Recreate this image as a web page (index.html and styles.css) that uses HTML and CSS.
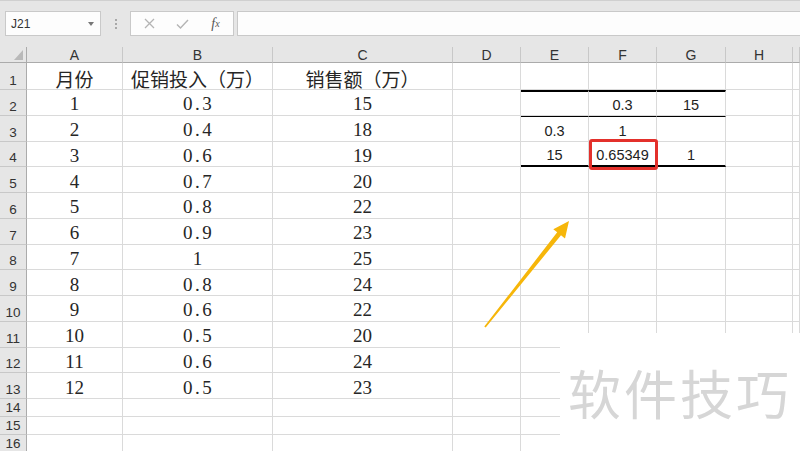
FILE: index.html
```html
<!DOCTYPE html>
<html lang="zh">
<head>
<meta charset="utf-8">
<title>Excel</title>
<link rel="stylesheet" href="styles.css">
</head>
<body>
<div class="toolbar">
  <div class="namebox"><span>J21</span><span class="caret"></span></div>
  <div class="dots"><i></i><i></i><i></i></div>
  <div class="fxbox">
    <span class="ico"><svg width="11" height="11" viewBox="0 0 11 11"><path d="M1 1L10 10M10 1L1 10" stroke="#b4b4b4" stroke-width="1.3" fill="none"/></svg></span>
    <span class="ico"><svg width="13" height="10" viewBox="0 0 13 10"><path d="M1 5.5L4.5 9L12 1" stroke="#b4b4b4" stroke-width="1.4" fill="none"/></svg></span>
    <span class="ico fx">f<sub>x</sub></span>
  </div>
  <div class="input"></div>
</div>

<div class="sheet">
  <div class="ch corner"><span class="tri"></span></div><div class="ch">A</div><div class="ch">B</div><div class="ch">C</div><div class="ch">D</div><div class="ch">E</div><div class="ch">F</div><div class="ch">G</div><div class="ch">H</div><div class="ch"></div>

  <div class="rh">1</div><div class="c t">月份</div><div class="c t">促销投入（万）</div><div class="c t">销售额（万）</div><div class="c"></div><div class="c"></div><div class="c"></div><div class="c"></div><div class="c"></div><div class="c"></div>

  <div class="rh">2</div><div class="c t">1</div><div class="c t n">0.3</div><div class="c t">15</div><div class="c"></div><div class="c s bt2"></div><div class="c s bt2">0.3</div><div class="c s bt2">15</div><div class="c"></div><div class="c"></div>

  <div class="rh">3</div><div class="c t">2</div><div class="c t n">0.4</div><div class="c t">18</div><div class="c"></div><div class="c s bt1">0.3</div><div class="c s bt1">1</div><div class="c s bt1"></div><div class="c"></div><div class="c"></div>

  <div class="rh">4</div><div class="c t">3</div><div class="c t n">0.6</div><div class="c t">19</div><div class="c"></div><div class="c s bb2">15</div><div class="c s bb2">0.65349</div><div class="c s bb2">1</div><div class="c"></div><div class="c"></div>

  <div class="rh">5</div><div class="c t">4</div><div class="c t n">0.7</div><div class="c t">20</div><div class="c"></div><div class="c"></div><div class="c"></div><div class="c"></div><div class="c"></div><div class="c"></div>

  <div class="rh">6</div><div class="c t">5</div><div class="c t n">0.8</div><div class="c t">22</div><div class="c"></div><div class="c"></div><div class="c"></div><div class="c"></div><div class="c"></div><div class="c"></div>

  <div class="rh">7</div><div class="c t">6</div><div class="c t n">0.9</div><div class="c t">23</div><div class="c"></div><div class="c"></div><div class="c"></div><div class="c"></div><div class="c"></div><div class="c"></div>

  <div class="rh">8</div><div class="c t">7</div><div class="c t">1</div><div class="c t">25</div><div class="c"></div><div class="c"></div><div class="c"></div><div class="c"></div><div class="c"></div><div class="c"></div>

  <div class="rh">9</div><div class="c t">8</div><div class="c t n">0.8</div><div class="c t">24</div><div class="c"></div><div class="c"></div><div class="c"></div><div class="c"></div><div class="c"></div><div class="c"></div>

  <div class="rh">10</div><div class="c t">9</div><div class="c t n">0.6</div><div class="c t">22</div><div class="c"></div><div class="c"></div><div class="c"></div><div class="c"></div><div class="c"></div><div class="c"></div>

  <div class="rh">11</div><div class="c t">10</div><div class="c t n">0.5</div><div class="c t">20</div><div class="c"></div><div class="c"></div><div class="c"></div><div class="c"></div><div class="c"></div><div class="c"></div>

  <div class="rh">12</div><div class="c t">11</div><div class="c t n">0.6</div><div class="c t">24</div><div class="c"></div><div class="c"></div><div class="c"></div><div class="c"></div><div class="c"></div><div class="c"></div>

  <div class="rh">13</div><div class="c t">12</div><div class="c t n">0.5</div><div class="c t">23</div><div class="c"></div><div class="c"></div><div class="c"></div><div class="c"></div><div class="c"></div><div class="c"></div>

  <div class="rh">14</div><div class="c"></div><div class="c"></div><div class="c"></div><div class="c"></div><div class="c"></div><div class="c"></div><div class="c"></div><div class="c"></div><div class="c"></div>

  <div class="rh">15</div><div class="c"></div><div class="c"></div><div class="c"></div><div class="c"></div><div class="c"></div><div class="c"></div><div class="c"></div><div class="c"></div><div class="c"></div>

  <div class="rh">16</div><div class="c"></div><div class="c"></div><div class="c"></div><div class="c"></div><div class="c"></div><div class="c"></div><div class="c"></div><div class="c"></div><div class="c"></div>
</div>

<div class="highlight"></div>

<svg class="arrow" width="800" height="451" viewBox="0 0 800 451">
  <polygon points="484.3,326.6 557.2,232.2 553.3,229.2 569,221 565,238.6 561,235.2 485.7,327.6" fill="#f6b60a"/>
</svg>

<div class="watermark"><span>软件技巧</span></div>
</body>
</html>
```

FILE: styles.css
```css
html, body {
  margin: 0;
  padding: 0;
}

body {
  width: 800px;
  height: 451px;
  overflow: hidden;
  position: relative;
  background: #ffffff;
  font-family: "Liberation Sans", Arial, sans-serif;
}

/* ---------- formula bar ---------- */
.toolbar {
  height: 47px;
  box-sizing: border-box;
  background: #e6e6e6;
  border-top: 1px solid #d0d0d0;
  padding-top: 10px;
  display: flex;
  align-items: flex-start;
}

.namebox {
  margin-left: 5px;
  width: 96px;
  height: 25px;
  box-sizing: border-box;
  background: #fdfdfd;
  border: 1px solid #c9c9c9;
  display: flex;
  align-items: center;
  justify-content: space-between;
  padding: 0 6px 0 5px;
  font-size: 12px;
  color: #333;
}

.caret {
  width: 0;
  height: 0;
  border-left: 3.5px solid transparent;
  border-right: 3.5px solid transparent;
  border-top: 4px solid #777;
}

.dots {
  width: 29px;
  height: 25px;
  display: flex;
  flex-direction: column;
  align-items: center;
  justify-content: center;
  gap: 2px;
}

.dots i {
  display: block;
  width: 2px;
  height: 2px;
  background: #a8a8a8;
}

.fxbox {
  width: 104px;
  height: 25px;
  box-sizing: border-box;
  background: #fdfdfd;
  border: 1px solid #c9c9c9;
  display: flex;
  align-items: center;
  padding-left: 2px;
}

.ico {
  width: 33px;
  display: flex;
  align-items: center;
  justify-content: center;
}

.fx {
  font-family: "Liberation Serif", serif;
  font-style: italic;
  font-size: 14px;
  color: #555;
}

.fx sub {
  font-size: 10px;
  vertical-align: -1px;
}

.input {
  margin-left: 3px;
  flex: 1;
  height: 25px;
  box-sizing: border-box;
  background: #fdfdfd;
  border: 1px solid #c9c9c9;
  border-right: none;
}

/* ---------- sheet grid ---------- */
.sheet {
  display: grid;
  grid-template-columns: 27px 96px 150px 180px 68px 68px 68px 69px 67px 1fr;
  grid-template-rows: 16px 27px repeat(12, 25.75px) repeat(3, 18px);
}

.sheet > div {
  box-sizing: border-box;
  min-width: 0;
}

.ch {
  background: #e6e6e6;
  border-right: 1px solid #c8c8c8;
  border-bottom: 1px solid #ababab;
  display: flex;
  align-items: center;
  justify-content: center;
  font-size: 14px;
  color: #333;
}

.corner {
  align-items: flex-end;
  justify-content: flex-end;
  padding: 0 3px 2px 0;
  border-right: 1px solid #ababab;
}

.tri {
  width: 0;
  height: 0;
  border-left: 9px solid transparent;
  border-bottom: 10px solid #b9b9b9;
}

.rh {
  background: #e6e6e6;
  border-right: 1px solid #ababab;
  border-bottom: 1px solid #c8c8c8;
  display: flex;
  align-items: flex-end;
  justify-content: center;
  font-size: 13.5px;
  line-height: 15px;
  color: #333;
  padding-bottom: 1px;
}

.c {
  border-right: 1px solid #dadada;
  border-bottom: 1px solid #dadada;
  display: flex;
  align-items: center;
  justify-content: center;
  white-space: nowrap;
}

.t {
  font-family: "Liberation Serif", "Noto Sans CJK SC", serif;
  font-size: 19px;
  color: #262626;
  padding-top: 4px;
}

.n {
  letter-spacing: 2.5px;
  padding-left: 2px;
}

.s {
  font-family: "Liberation Sans", Arial, sans-serif;
  font-size: 14.5px;
  color: #222;
  padding-top: 4px;
}

.bt2 {
  border-top: 2px solid #000;
}

.bt1 {
  border-top: 1px solid #000;
}

.bb2 {
  border-bottom: 2px solid #000;
}

/* ---------- overlays ---------- */
.highlight {
  position: absolute;
  left: 589px;
  top: 139px;
  width: 69px;
  height: 31px;
  box-sizing: border-box;
  border: 3px solid #e3302b;
  border-radius: 3px;
}

.arrow {
  position: absolute;
  left: 0;
  top: 0;
  pointer-events: none;
}

.watermark {
  position: absolute;
  left: 560px;
  top: 333px;
  right: 0;
  bottom: 0;
  background: #ffffff;
  display: flex;
  align-items: center;
  padding-left: 8px;
}

.watermark span {
  font-family: "Noto Sans CJK SC", sans-serif;
  font-size: 53px;
  letter-spacing: 3px;
  color: #d6d6d6;
  line-height: 1;
}
```
